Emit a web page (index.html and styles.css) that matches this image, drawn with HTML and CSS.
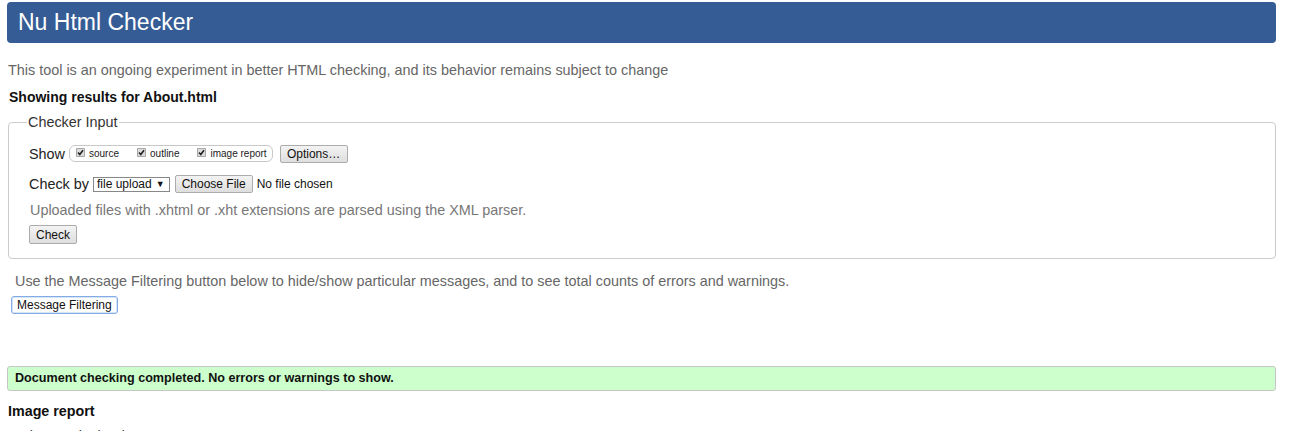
FILE: index.html
```html
<!DOCTYPE html>
<html lang="en">
<head>
<meta charset="utf-8">
<title>Nu Html Checker</title>
<link rel="stylesheet" href="styles.css">
</head>
<body>
<h1 class="title">Nu Html Checker</h1>
<p class="intro">This tool is an ongoing experiment in better HTML checking, and its behavior remains subject to change</p>
<p class="showing">Showing results for About.html</p>
<fieldset class="input">
  <legend class="legend">Checker Input</legend>
  <div class="row show-row">
    <span class="label">Show</span>
    <span class="pill">
      <span class="opt"><span class="cb"><svg viewBox="0 0 9 9" width="9" height="9"><path d="M2 4.5 L3.8 6.5 L7 2.2" fill="none" stroke="#222" stroke-width="1.6"/></svg></span>source</span>
      <span class="opt"><span class="cb"><svg viewBox="0 0 9 9" width="9" height="9"><path d="M2 4.5 L3.8 6.5 L7 2.2" fill="none" stroke="#222" stroke-width="1.6"/></svg></span>outline</span>
      <span class="opt"><span class="cb"><svg viewBox="0 0 9 9" width="9" height="9"><path d="M2 4.5 L3.8 6.5 L7 2.2" fill="none" stroke="#222" stroke-width="1.6"/></svg></span>image report</span>
    </span>
    <button class="btn options" type="button">Options…</button>
  </div>
  <div class="row check-row">
    <span class="label">Check by</span>
    <span class="select">file upload <span class="arrow">▼</span></span>
    <button class="btn choose" type="button">Choose File</button>
    <span class="nofile">No file chosen</span>
  </div>
  <p class="note">Uploaded files with .xhtml or .xht extensions are parsed using the XML parser.</p>
  <button class="btn check" type="button">Check</button>
</fieldset>
<p class="filter-note">Use the Message Filtering button below to hide/show particular messages, and to see total counts of errors and warnings.</p>
<button class="btn filter" type="button">Message Filtering</button>
<div class="success">Document checking completed. No errors or warnings to show.</div>
<h2 class="report">Image report</h2>
<p class="noimg">No images in the document.</p>
</body>
</html>
```

FILE: styles.css
```css
html, body {
  background: #fff;
}
body {
  margin: 0;
  padding: 2px 29px 0 7px;
  font-family: "Liberation Sans", Arial, sans-serif;
  font-size: 14px;
  color: #111;
  overflow: hidden;
}
.title {
  margin: 0;
  height: 41px;
  line-height: 41px;
  padding-left: 11px;
  background: #365c96;
  color: #fff;
  font-size: 23px;
  font-weight: normal;
  border-radius: 4px;
}
.intro {
  margin: 19px 0 0 1px;
  line-height: 16px;
  font-size: 14.4px;
  color: #666;
}
.showing {
  margin: 11px 0 0 2px;
  line-height: 16px;
  font-size: 14px;
  font-weight: bold;
  color: #111;
}
.input {
  margin: 9px 0 0 1px;
  padding: 14px 20px 14px 20px;
  border: 1px solid #ccc;
  border-radius: 4px;
  min-width: 0;
}
.legend {
  padding: 0 1px;
  margin-left: -2px;
  line-height: 16px;
  font-size: 14.4px;
  color: #333;
}
.row {
  display: flex;
  align-items: center;
}
.label {
  font-size: 14.4px;
  color: #222;
}
.show-row {
  height: 19px;
}
.pill {
  display: flex;
  align-items: center;
  height: 15px;
  margin-left: 4px;
  padding: 0 5px 0 6px;
  border: 1px solid #c8c8c8;
  border-radius: 6px;
  font-size: 10px;
  color: #222;
  gap: 18px;
}
.opt {
  display: flex;
  align-items: center;
  line-height: 10px;
}
.cb {
  display: inline-block;
  width: 9px;
  height: 9px;
  margin: -3px 4px 0 0;
  background: #dcdcdc;
  box-shadow: inset 0 0 0 1px #a8a8a8;
  border-radius: 1px;
}
.cb svg {
  display: block;
}
.btn {
  font-family: "Liberation Sans", Arial, sans-serif;
  font-size: 12px;
  color: #111;
  background: linear-gradient(#f3f3f3, #dedede);
  border: 1px solid #acacac;
  border-radius: 2px;
  padding: 0 6px;
  height: 18px;
  line-height: 16px;
}
.options {
  margin-left: 7px;
  width: 68px;
}
.check-row {
  margin-top: 12px;
  height: 18px;
}
.select {
  display: inline-flex;
  align-items: center;
  margin-left: 4px;
  height: 13px;
  padding: 0 4px 0 3px;
  border: 1px solid #888;
  font-size: 12px;
  color: #111;
  line-height: 13px;
}
.arrow {
  font-size: 9px;
  margin-left: 4px;
}
.choose {
  margin-left: 5px;
}
.nofile {
  margin-left: 4px;
  font-size: 12px;
  color: #111;
}
.note {
  margin: 9px 0 0 1px;
  line-height: 16px;
  font-size: 14.4px;
  color: #777;
}
.check {
  margin-top: 7px;
  height: 19px;
  display: block;
}
.filter-note {
  margin: 14px 0 0 8px;
  line-height: 16px;
  font-size: 14.4px;
  color: #666;
}
.filter {
  display: block;
  margin: 7px 0 0 4px;
  background: #fff;
  border: 1px solid #83abe6;
  box-shadow: inset 0 0 0 1px #d6e4f8;
  border-radius: 3px;
  padding: 0 5px;
}
.success {
  margin-top: 52px;
  height: 23px;
  line-height: 23px;
  padding-left: 7px;
  background: #ccffcc;
  border: 1px solid #c6c6c6;
  border-radius: 3px;
  font-size: 12.6px;
  font-weight: bold;
  color: #111;
}
.report {
  margin: 12px 0 0 1px;
  font-size: 14.3px;
  line-height: 16px;
  font-weight: bold;
  color: #111;
}
.noimg {
  margin: 9px 0 0 1px;
  font-size: 14px;
  color: #333;
}
```
